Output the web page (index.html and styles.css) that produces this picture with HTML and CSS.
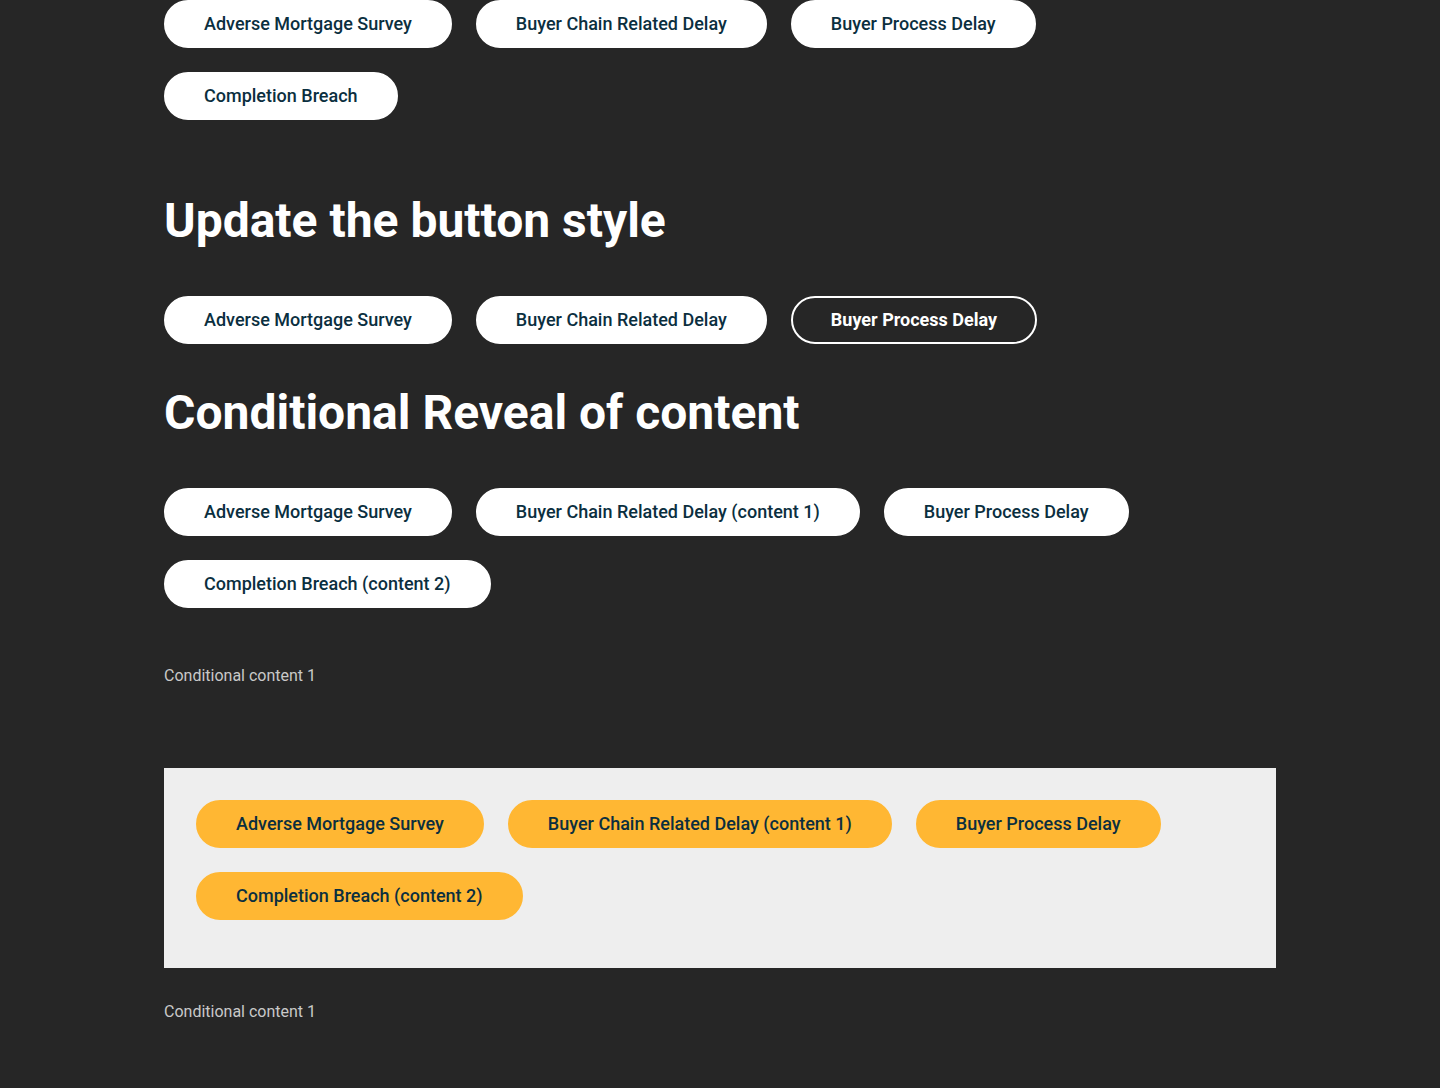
FILE: index.html
```html
<!DOCTYPE html>
<html lang="en">
<head>
<meta charset="utf-8">
<title>Button styles</title>
<link rel="stylesheet" href="styles.css">
</head>
<body>
<main class="page">
  <div class="chips">
    <button class="chip">Adverse Mortgage Survey</button>
    <button class="chip">Buyer Chain Related Delay</button>
    <button class="chip">Buyer Process Delay</button>
    <button class="chip">Completion Breach</button>
  </div>

  <h2 class="title title-first">Update the button style</h2>
  <div class="chips">
    <button class="chip">Adverse Mortgage Survey</button>
    <button class="chip">Buyer Chain Related Delay</button>
    <button class="chip chip-selected">Buyer Process Delay</button>
  </div>

  <h2 class="title title-second">Conditional Reveal of content</h2>
  <div class="chips">
    <button class="chip">Adverse Mortgage Survey</button>
    <button class="chip">Buyer Chain Related Delay (content 1)</button>
    <button class="chip">Buyer Process Delay</button>
    <button class="chip">Completion Breach (content 2)</button>
  </div>
  <p class="note note-first">Conditional content 1</p>

  <section class="panel">
    <div class="chips">
      <button class="chip chip-yellow">Adverse Mortgage Survey</button>
      <button class="chip chip-yellow">Buyer Chain Related Delay (content 1)</button>
      <button class="chip chip-yellow">Buyer Process Delay</button>
      <button class="chip chip-yellow">Completion Breach (content 2)</button>
    </div>
  </section>
  <p class="note note-second">Conditional content 1</p>
</main>
</body>
</html>
```
FILE: styles.css
```css
html, body {
  margin: 0;
  padding: 0;
  background: #262626;
}
body {
  font-family: Roboto, "Liberation Sans", sans-serif;
  color: #ffffff;
}
.page {
  width: 1112px;
  margin: 0 auto;
  padding-bottom: 40px;
}
.chips {
  display: flex;
  flex-wrap: wrap;
  gap: 24px;
}
.chip {
  height: 48px;
  padding: 0 38px;
  border: 2px solid #ffffff;
  border-radius: 24px;
  background: #ffffff;
  color: #0b2f3f;
  font-family: Roboto, "Liberation Sans", sans-serif;
  font-size: 18px;
  font-weight: 500;
  line-height: 44px;
  cursor: pointer;
  white-space: nowrap;
}
.chip-selected {
  background: transparent;
  color: #ffffff;
  font-weight: 700;
}
.chip-yellow {
  background: #ffb733;
  border-color: #ffb733;
}
.title {
  margin: 0;
  font-size: 48px;
  font-weight: 700;
  line-height: 58px;
  color: #ffffff;
}
.title-first {
  margin-top: 72px;
  margin-bottom: 46px;
}
.title-second {
  margin-top: 40px;
  margin-bottom: 46px;
}
.note {
  margin: 0;
  font-size: 16px;
  line-height: 24px;
  color: #c9c9c9;
}
.note-first {
  margin-top: 56px;
  margin-bottom: 80px;
}
.panel {
  background: #eeeeee;
  padding: 32px 32px 48px;
}
.note-second {
  margin-top: 32px;
}
```
